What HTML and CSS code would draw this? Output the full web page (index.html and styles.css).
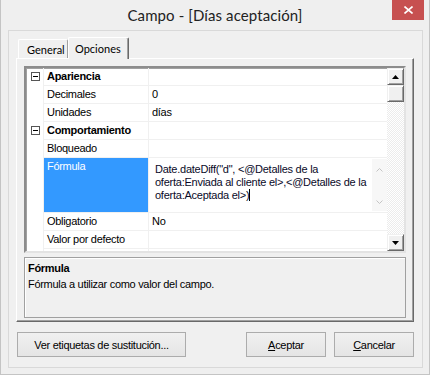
FILE: index.html
```html
<!DOCTYPE html>
<html lang="es">
<head>
  <meta charset="UTF-8">
  <title>Campo - [Días aceptación]</title>
  <link rel="stylesheet" href="styles.css">
</head>
<body>

  <div class="window">
    <div class="titlebar">
      <span></span>
      <div class="title">Campo - [Días aceptación]</div>
      <div class="title-right">
        <div class="close">
          <svg width="9" height="8" viewBox="0 0 9 8"><path d="M0.5 0.5L8.5 7.5M8.5 0.5L0.5 7.5" stroke="#fff" stroke-width="1.6"/></svg>
        </div>
      </div>
    </div>

    <div class="client">
      <div class="tabs">
        <div class="tab">General</div>
        <div class="tab active">Opciones</div>
      </div>

      <div class="tab-page">
        <div class="propgrid">
          <div class="rows">
            <div class="row cat">
              <div class="gutter"><svg width="9" height="9" viewBox="0 0 9 9"><rect x="0.5" y="0.5" width="8" height="8" fill="#fff" stroke="#555"/><path d="M2 4.5h5" stroke="#000"/></svg></div>
              <div class="name">Apariencia</div>
              <div class="value"></div>
            </div>
            <div class="row">
              <div class="gutter"></div>
              <div class="name">Decimales</div>
              <div class="value">0</div>
            </div>
            <div class="row">
              <div class="gutter"></div>
              <div class="name">Unidades</div>
              <div class="value">días</div>
            </div>
            <div class="row cat">
              <div class="gutter"><svg width="9" height="9" viewBox="0 0 9 9"><rect x="0.5" y="0.5" width="8" height="8" fill="#fff" stroke="#555"/><path d="M2 4.5h5" stroke="#000"/></svg></div>
              <div class="name">Comportamiento</div>
              <div class="value"></div>
            </div>
            <div class="row">
              <div class="gutter"></div>
              <div class="name">Bloqueado</div>
              <div class="value"></div>
            </div>
            <div class="row tall">
              <div class="gutter"></div>
              <div class="name selected">Fórmula</div>
              <div class="value">
                <div class="formula">
                  <div class="formula-text">Date.dateDiff("d", &lt;@Detalles de la<br>oferta:Enviada al cliente el&gt;,&lt;@Detalles de la<br>oferta:Aceptada el&gt;)<span class="caret"></span></div>
                  <div class="mini-scroll">
                    <svg width="7" height="4" viewBox="0 0 7 4"><path d="M0.5 3.5L3.5 0.5L6.5 3.5" fill="none" stroke="#c4c4c4"/></svg>
                    <svg width="7" height="4" viewBox="0 0 7 4"><path d="M0.5 0.5L3.5 3.5L6.5 0.5" fill="none" stroke="#c4c4c4"/></svg>
                  </div>
                </div>
              </div>
            </div>
            <div class="row">
              <div class="gutter"></div>
              <div class="name">Obligatorio</div>
              <div class="value">No</div>
            </div>
            <div class="row">
              <div class="gutter"></div>
              <div class="name">Valor por defecto</div>
              <div class="value"></div>
            </div>
            <div class="row">
              <div class="gutter"></div>
              <div class="name"></div>
              <div class="value"></div>
            </div>
          </div>
          <div class="vscroll">
            <div class="sb-btn"><svg width="7" height="4" viewBox="0 0 7 4"><path d="M3.5 0L7 4H0z"/></svg></div>
            <div class="sb-btn"></div>
            <div class="sb-track"></div>
            <div class="sb-btn"><svg width="7" height="4" viewBox="0 0 7 4"><path d="M0 0H7L3.5 4z"/></svg></div>
          </div>
        </div>

        <div class="desc">
          <div class="desc-title">Fórmula</div>
          <div class="desc-text">Fórmula a utilizar como valor del campo.</div>
        </div>
      </div>

      <div class="buttons">
        <button class="btn wide">Ver etiquetas de sustitución...</button>
        <button class="btn push"><u>A</u>ceptar</button>
        <button class="btn"><u>C</u>ancelar</button>
      </div>
    </div>
  </div>

</body>
</html>
```

FILE: styles.css
```css
body {
  margin: 0;
  background: #f0f0f0;
  font-family: "Liberation Sans", Arial, sans-serif;
  font-size: 11px;
  letter-spacing: -0.3px;
  color: #000;
}
.window {
  width: 430px;
  height: 375px;
  box-sizing: border-box;
  border: 1px solid #c4c4c4;
  border-top: 0;
  background: #efefef;
}
.titlebar {
  display: grid;
  grid-template-columns: 1fr auto 1fr;
  height: 30px;
}
.title {
  font-family: Lato, "Open Sans", sans-serif;
  font-size: 15px;
  letter-spacing: 0.1px;
  line-height: 30px;
  color: #222;
  white-space: nowrap;
}
.title-right {
  display: flex;
  justify-content: flex-end;
  padding-right: 5px;
}
.close {
  width: 32px;
  height: 20px;
  background: #c75050;
  display: flex;
  align-items: center;
  justify-content: center;
}
.client {
  margin-left: 7px;
  width: 415px;
  height: 338px;
  box-sizing: border-box;
  border: 1px solid #d9d9d9;
  background: #f0f0f0;
  padding: 6px 8px 0 7px;
}
.tabs {
  display: flex;
  align-items: flex-end;
  height: 21px;
  padding-left: 2px;
}
.tab {
  width: 50px;
  height: 19px;
  box-sizing: border-box;
  border: 1px solid;
  border-color: #fff #a0a0a0 transparent #fff;
  border-bottom: 0;
  border-radius: 2px 2px 0 0;
  padding: 1px 0 0 8px;
  font-family: Lato, "Open Sans", sans-serif;
  font-size: 11px;
  letter-spacing: 0;
  line-height: 18px;
}
.tab.active {
  width: 61px;
  height: 22px;
  margin-bottom: -1px;
  padding: 2px 0 0 6px;
  border-right-color: #696969;
  box-shadow: inset -1px 0 0 #a0a0a0;
  background: #f0f0f0;
  position: relative;
  z-index: 1;
}
.tab-page {
  height: 264px;
  box-sizing: border-box;
  border: 1px solid;
  border-color: #fff #696969 #696969 #fff;
  box-shadow: inset -1px -1px 0 #a0a0a0;
  padding: 7px 7px 0 7px;
}
.propgrid {
  display: flex;
  height: 187px;
  box-sizing: border-box;
  border: 2px solid;
  border-color: #8c8c8c #e3e3e3 #e3e3e3 #8c8c8c;
  box-shadow: inset 1px 1px 0 #a0a0a0;
  background: #fff;
}
.rows {
  flex: 1;
  overflow: hidden;
}
.row {
  display: grid;
  grid-template-columns: 18px 105px 1fr;
  height: 18px;
}
.row.tall {
  height: 55px;
}
.gutter {
  border-right: 1px solid #f0f0f0;
  display: flex;
  justify-content: center;
  padding: 4px 0 0 2px;
  box-sizing: border-box;
}
.name, .value {
  border-bottom: 1px solid #f0f0f0;
  line-height: 17px;
  white-space: nowrap;
  overflow: hidden;
}
.name {
  border-right: 1px solid #f0f0f0;
  padding-left: 3px;
}
.value {
  padding-left: 3px;
}
.cat .name {
  font-weight: bold;
}
.name.selected {
  background: #3399ff;
  color: #fff;
}
.formula {
  display: flex;
  height: 54px;
  margin-left: -3px;
}
.formula-text {
  flex: 1;
  padding: 5px 0 0 6px;
  line-height: 13px;
  letter-spacing: -0.25px;
  color: #0a0a28;
}
.caret {
  display: inline-block;
  width: 1px;
  height: 12px;
  background: #000;
  vertical-align: -2px;
}
.mini-scroll {
  width: 15px;
  margin: 1px 0;
  background: #f7f7f7;
  display: flex;
  flex-direction: column;
  align-items: center;
  justify-content: space-between;
  padding: 9px 0 7px;
  box-sizing: border-box;
}
.vscroll {
  width: 17px;
  display: flex;
  flex-direction: column;
}
.sb-btn {
  height: 17px;
  box-sizing: border-box;
  background: #f0f0f0;
  border: 1px solid;
  border-color: #f0f0f0 #696969 #696969 #f0f0f0;
  box-shadow: inset 1px 1px 0 #fff, inset -1px -1px 0 #a0a0a0;
  display: flex;
  align-items: center;
  justify-content: center;
}
.sb-track {
  flex: 1;
  background: repeating-conic-gradient(#fff 0 25%, #ececec 0 50%) 0 0 / 2px 2px;
}
.desc {
  height: 61px;
  margin-top: 4px;
  box-sizing: border-box;
  border: 1px solid #a0a0a0;
  box-shadow: inset 1px 1px 0 #fff;
  padding: 4px 3px;
}
.desc-title {
  font-weight: bold;
  line-height: 13px;
  margin-bottom: 3px;
}
.desc-text {
  line-height: 13px;
}
.buttons {
  display: flex;
  gap: 8px;
  margin-top: 10px;
  padding-left: 1px;
}
.btn {
  width: 80px;
  height: 25px;
  border: 1px solid #acacac;
  background: linear-gradient(#f0f0f0, #e5e5e5);
  font-family: "Liberation Sans", Arial, sans-serif;
  font-size: 11px;
  letter-spacing: -0.3px;
  color: #000;
  padding: 0;
}
.btn.wide {
  width: 169px;
}
.btn.push {
  margin-left: auto;
}
```
